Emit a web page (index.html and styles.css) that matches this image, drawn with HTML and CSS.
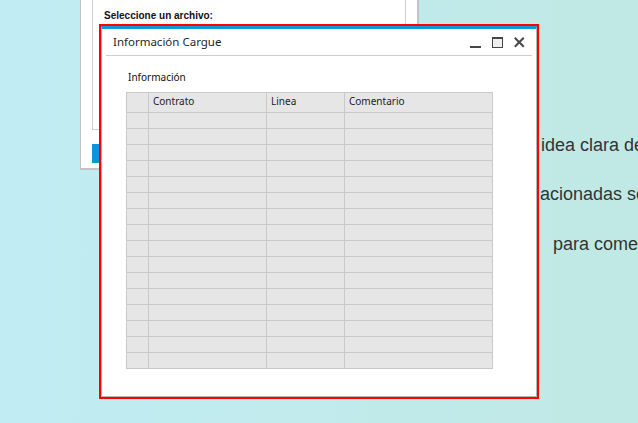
FILE: index.html
```html
<!DOCTYPE html>
<html lang="es">
<head>
<meta charset="utf-8">
<title>Información Cargue</title>
<link rel="stylesheet" href="styles.css">
</head>
<body>
<main class="page">
  <p class="line l1">idea clara de los pasos a seguir</p>
  <p class="line l2">acionadas se presentan a continuación</p>
  <p class="line l3"><span class="dot"></span>para comenzar el proceso</p>
</main>

<section class="back-dialog">
  <div class="file-box">
    <div class="file-label">Seleccione un archivo:</div>
  </div>
  <div class="back-btn"></div>
</section>

<section class="window">
  <header class="titlebar">
    <span class="title">Información Cargue</span>
    <div class="controls">
      <svg class="ctl" width="12" height="12" viewBox="0 0 12 12"><rect x="0" y="9" width="11" height="2" fill="#474747"/></svg>
      <svg class="ctl" width="12" height="12" viewBox="0 0 12 12"><rect x="0.5" y="0.5" width="10" height="10" fill="#efefef" stroke="#474747"/><rect x="0.5" y="0.5" width="10" height="1.5" fill="#474747"/></svg>
      <svg class="ctl" width="12" height="12" viewBox="0 0 12 12"><path d="M1.5 1.5 L9 9 M9 1.5 L1.5 9" stroke="#474747" stroke-width="2" stroke-linecap="square"/></svg>
    </div>
  </header>
  <div class="win-body">
    <div class="section-label">Información</div>
    <div class="grid">
      <div class="cell head"></div><div class="cell head">Contrato</div><div class="cell head">Linea</div><div class="cell head">Comentario</div>
      <div class="cell"></div><div class="cell"></div><div class="cell"></div><div class="cell"></div>
      <div class="cell"></div><div class="cell"></div><div class="cell"></div><div class="cell"></div>
      <div class="cell"></div><div class="cell"></div><div class="cell"></div><div class="cell"></div>
      <div class="cell"></div><div class="cell"></div><div class="cell"></div><div class="cell"></div>
      <div class="cell"></div><div class="cell"></div><div class="cell"></div><div class="cell"></div>
      <div class="cell"></div><div class="cell"></div><div class="cell"></div><div class="cell"></div>
      <div class="cell"></div><div class="cell"></div><div class="cell"></div><div class="cell"></div>
      <div class="cell"></div><div class="cell"></div><div class="cell"></div><div class="cell"></div>
      <div class="cell"></div><div class="cell"></div><div class="cell"></div><div class="cell"></div>
      <div class="cell"></div><div class="cell"></div><div class="cell"></div><div class="cell"></div>
      <div class="cell"></div><div class="cell"></div><div class="cell"></div><div class="cell"></div>
      <div class="cell"></div><div class="cell"></div><div class="cell"></div><div class="cell"></div>
      <div class="cell"></div><div class="cell"></div><div class="cell"></div><div class="cell"></div>
      <div class="cell"></div><div class="cell"></div><div class="cell"></div><div class="cell"></div>
      <div class="cell"></div><div class="cell"></div><div class="cell"></div><div class="cell"></div>
      <div class="cell"></div><div class="cell"></div><div class="cell"></div><div class="cell"></div>
    </div>
  </div>
</section>
</body>
</html>
```

FILE: styles.css
```css
html, body {
  margin: 0;
  padding: 0;
  width: 638px;
  height: 423px;
  overflow: hidden;
}
body {
  background: linear-gradient(90deg, #c1ecf3 0%, #c0eaea 60%, #c0e9e5 100%);
  font-family: "Noto Sans", "Open Sans", sans-serif;
  position: relative;
}
.page {
  padding: 135px 0 0 539px;
  font-family: "Liberation Sans", Arial, sans-serif;
  font-size: 18px;
  line-height: 20px;
  color: #333;
  white-space: nowrap;
}
.line { margin: 0 0 29px 0; }
.l1 { padding-left: 2px; }
.l2 { padding-left: 1px; }
.l3 { margin-top: 30px; display: flex; align-items: center; }
.dot {
  display: inline-block;
  width: 2px;
  height: 2px;
  background: #1a9ad8;
  margin-right: 14px;
  margin-top: 4px;
}

/* back dialog (overlay) */
.back-dialog {
  position: absolute;
  left: 80px;
  top: -60px;
  width: 339px;
  height: 230px;
  box-sizing: border-box;
  background: #fff;
  border: 1px solid #c4c4c4;
  border-right-width: 2px;
  border-bottom-width: 2px;
  display: flex;
  flex-direction: column;
  padding: 0 11px;
}
.file-box {
  height: 189px;
  border: 1px solid #cfcfcf;
  border-top: none;
  padding: 69px 0 0 11px;
  box-sizing: border-box;
}
.file-label {
  font-family: "Liberation Sans", Arial, sans-serif;
  font-weight: bold;
  font-size: 10px;
  line-height: 12px;
  color: #111;
}
.back-btn {
  margin-top: 14px;
  width: 80px;
  height: 19px;
  background: #0a96da;
}

/* front window (overlay) */
.window {
  position: absolute;
  left: 101px;
  top: 26px;
  width: 436px;
  height: 371px;
  box-sizing: border-box;
  background: #fff;
  border: 1px solid #b4b4b4;
  border-top: 3px solid #1296d8;
  outline: 2px solid #f00;
  display: flex;
  flex-direction: column;
}
.titlebar {
  margin: 0 4px;
  height: 26px;
  border-bottom: 1px solid #cdcdcd;
  display: flex;
  align-items: center;
  justify-content: space-between;
  padding: 0 6px 0 7px;
}
.title {
  font-size: 11.5px;
  color: #1f1f2a;
  line-height: 14px;
}
.controls {
  display: flex;
  align-items: center;
  gap: 10px;
  padding-top: 1px;
}
.ctl { display: block; }
.win-body {
  padding: 14px 0 0 24px;
}
.section-label {
  font-size: 10px;
  line-height: 14px;
  color: #111;
  padding-left: 2px;
  margin-bottom: 8px;
}
.grid {
  display: grid;
  grid-template-columns: 21px 117px 77px 147px;
  grid-template-rows: 19px repeat(16, 15px);
  gap: 1px;
  background: #c9c9c9;
  border: 1px solid #c9c9c9;
  width: max-content;
}
.cell {
  background: #e6e6e6;
}
.cell.head {
  font-size: 10px;
  line-height: 17px;
  color: #222;
  padding-left: 4px;
}
```
